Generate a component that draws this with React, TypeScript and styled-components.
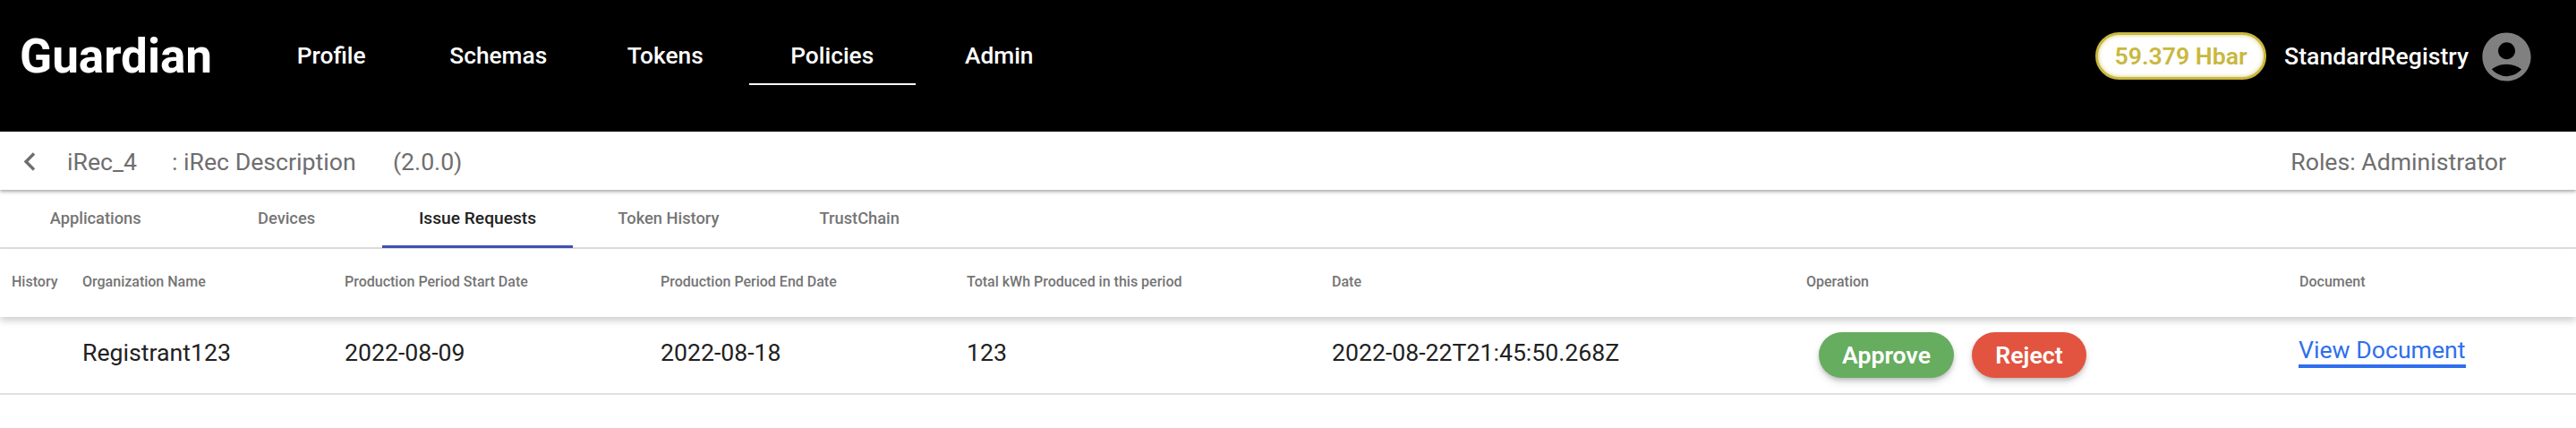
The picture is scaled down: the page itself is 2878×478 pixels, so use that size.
import React from "react";
import styled, { createGlobalStyle } from "styled-components";

const Global = createGlobalStyle`
  html, body { margin: 0; padding: 0; background: #fff; }
  body { font-family: Roboto, "Liberation Sans", sans-serif; width: 2878px; height: 478px; overflow: hidden; }
`;

const Header = styled.header`
  height: 147px;
  background: #000;
  display: flex;
  align-items: flex-start;
  padding: 0 45px 0 22px;
  box-sizing: border-box;
`;
const Logo = styled.div`
  width: 255px;
  height: 126px;
  line-height: 126px;
  font-size: 53px;
  font-weight: 700;
  color: #fff;
`;
const Nav = styled.nav`
  display: flex;
  flex: 1;
`;
const NavItem = styled.a<{ $active?: boolean }>`
  width: 186.5px;
  height: 95px;
  padding-top: 37px;
  box-sizing: border-box;
  text-align: center;
  font-size: 26.3px;
  line-height: 50px;
  font-weight: 500;
  color: #fff;
  border-bottom: 2px solid ${(p) => (p.$active ? "#fff" : "transparent")};
`;
const UserArea = styled.div`
  display: flex;
  align-items: center;
  height: 126px;
`;
const Balance = styled.div`
  width: 191px;
  height: 53px;
  box-sizing: border-box;
  border: 3px solid #c9b83e;
  border-radius: 27px;
  background: #fff;
  box-shadow: inset 0 0 5px #d9cd7a;
  color: #c9b83e;
  font-size: 26.67px;
  font-weight: 600;
  display: flex;
  align-items: center;
  justify-content: center;
  margin-top: -1px;
`;
const UserName = styled.div`
  margin-left: 20px;
  font-size: 26.67px;
  font-weight: 500;
  color: #fff;
  width: 221px;
`;
const Avatar = styled.svg`
  width: 65px;
  height: 65px;
  fill: #808080;
  margin-left: -5px;
`;

const SubBar = styled.div`
  height: 65px;
  display: flex;
  align-items: center;
  background: #fff;
  box-shadow: 0 2px 4px rgba(0, 0, 0, 0.35);
  position: relative;
  padding: 2px 78px 0 20px;
  box-sizing: border-box;
  color: #6e6e6e;
  font-size: 26.67px;
`;
const Back = styled.svg`
  width: 26px;
  height: 26px;
  fill: none;
  stroke: #6e6e6e;
  stroke-width: 3.4px;
  margin-right: 29px;
`;
const PolicyName = styled.span`
  width: 117px;
`;
const PolicyDesc = styled.span`
  width: 247px;
`;
const RolesText = styled.span`
  margin-left: auto;
`;

const Tabs = styled.div`
  display: flex;
  height: 66px;
  box-sizing: border-box;
  border-bottom: 2px solid #e0e0e0;
`;
const Tab = styled.div<{ $active?: boolean }>`
  width: 213.4px;
  height: 65px;
  box-sizing: border-box;
  display: flex;
  align-items: center;
  justify-content: center;
  font-size: ${(p) => (p.$active ? "19.2px" : "18.3px")};
  font-weight: 500;
  color: ${(p) => (p.$active ? "#212121" : "#757575")};
  border-bottom: 3px solid ${(p) => (p.$active ? "#3f51b5" : "transparent")};
`;

const COLUMNS = "92px 293px 353px 342px 408px 530px 551px 309px";

const HeadRow = styled.div`
  display: grid;
  grid-template-columns: ${COLUMNS};
  height: 76px;
  padding-bottom: 4px;
  box-sizing: border-box;
  align-items: center;
  position: relative;
  background: #fff;
  box-shadow: 0 4px 8px rgba(0, 0, 0, 0.2);
  color: #757575;
  font-size: 16px;
  font-weight: 500;
`;
const HeadCell = styled.div<{ $first?: boolean }>`
  padding-left: ${(p) => (p.$first ? "13px" : "0")};
`;
const BodyRow = styled.div`
  display: grid;
  grid-template-columns: ${COLUMNS};
  height: 87px;
  box-sizing: border-box;
  align-items: center;
  border-bottom: 2px solid #e0e0e0;
  color: #212121;
  font-size: 26.67px;
`;
const BodyCell = styled.div`
  margin-top: -6px;
`;
const Actions = styled.div`
  display: flex;
  gap: 20px;
  padding-left: 14px;
`;
const ActionButton = styled.button<{ $bg: string; $w: number }>`
  width: ${(p) => p.$w}px;
  height: 51px;
  border: 0;
  border-radius: 26px;
  background: ${(p) => p.$bg};
  color: #fff;
  font-family: inherit;
  font-size: 26.67px;
  font-weight: 600;
  padding: 0;
  box-shadow: 0 3px 5px -1px rgba(0, 0, 0, 0.2), 0 5px 8px 0 rgba(0, 0, 0, 0.12);
`;
const DocLink = styled.a`
  color: #2f6fed;
  font-size: 26.67px;
  line-height: 31px;
  display: inline-block;
  border-bottom: 4px solid #2f6fed;
  justify-self: start;
  margin: -6px 0 0 -1px;
`;

const navItems = ["Profile", "Schemas", "Tokens", "Policies", "Admin"];
const tabs = ["Applications", "Devices", "Issue Requests", "Token History", "TrustChain"];
const heads = [
  "History",
  "Organization Name",
  "Production Period Start Date",
  "Production Period End Date",
  "Total kWh Produced in this period",
  "Date",
  "Operation",
  "Document",
];

export default function App() {
  return (
    <>
      <Global />
      <Header>
        <Logo>Guardian</Logo>
        <Nav>
          {navItems.map((n) => (
            <NavItem key={n} $active={n === "Policies"}>{n}</NavItem>
          ))}
        </Nav>
        <UserArea>
          <Balance>59.379 Hbar</Balance>
          <UserName>StandardRegistry</UserName>
          <Avatar viewBox="0 0 24 24">
            <path d="M12 2C6.48 2 2 6.48 2 12s4.48 10 10 10 10-4.48 10-10S17.52 2 12 2zm0 4c1.93 0 3.5 1.57 3.5 3.5S13.93 13 12 13s-3.5-1.57-3.5-3.5S10.07 6 12 6zm0 14c-2.03 0-4.43-.82-6.14-2.88C7.55 15.8 9.68 15 12 15s4.45.8 6.14 2.12C16.43 19.18 14.03 20 12 20z" />
          </Avatar>
        </UserArea>
      </Header>
      <SubBar>
        <Back viewBox="0 0 26 26">
          <path d="M18 3.5 L9 12.5 L18 21.5" />
        </Back>
        <PolicyName>iRec_4</PolicyName>
        <PolicyDesc>: iRec Description</PolicyDesc>
        <span>(2.0.0)</span>
        <RolesText>Roles: Administrator</RolesText>
      </SubBar>
      <Tabs>
        {tabs.map((t) => (
          <Tab key={t} $active={t === "Issue Requests"}>{t}</Tab>
        ))}
      </Tabs>
      <HeadRow>
        {heads.map((h, i) => (
          <HeadCell key={h} $first={i === 0}>{h}</HeadCell>
        ))}
      </HeadRow>
      <BodyRow>
        <div />
        <BodyCell>Registrant123</BodyCell>
        <BodyCell>2022-08-09</BodyCell>
        <BodyCell>2022-08-18</BodyCell>
        <BodyCell>123</BodyCell>
        <BodyCell>2022-08-22T21:45:50.268Z</BodyCell>
        <Actions>
          <ActionButton $bg="#66ad5f" $w={151}>Approve</ActionButton>
          <ActionButton $bg="#e25440" $w={128}>Reject</ActionButton>
        </Actions>
        <DocLink>View Document</DocLink>
      </BodyRow>
    </>
  );
}
